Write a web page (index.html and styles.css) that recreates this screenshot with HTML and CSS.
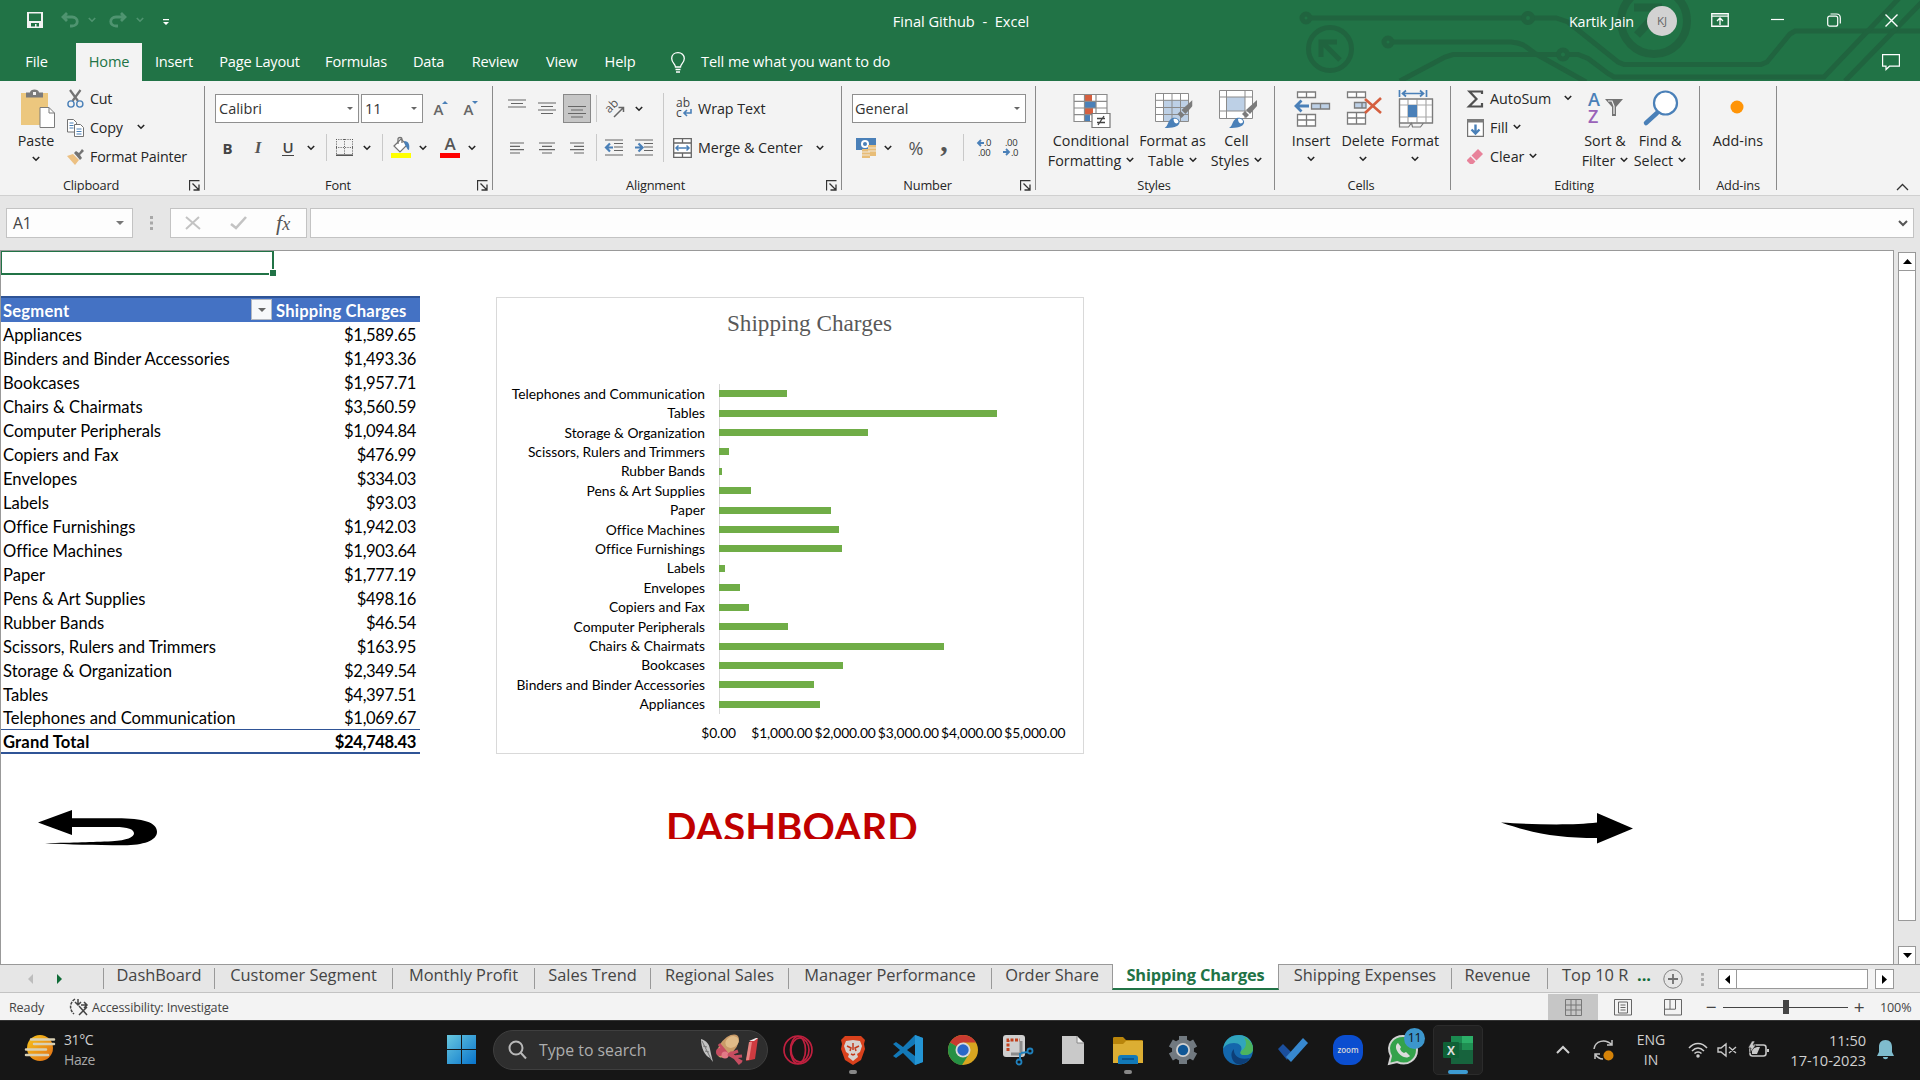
FILE: index.html
```html
<!DOCTYPE html>
<html lang="en">
<head>
<meta charset="utf-8">
<title>Final Github - Excel</title>
<link rel="stylesheet" href="styles.css">
</head>
<body>
<svg class="defs" width="0" height="0">
  <symbol id="chev" viewBox="0 0 8 6"><path d="M.8 1 4 4.2 7.2 1" fill="none" stroke="currentColor" stroke-width="1.6"/></symbol>
  <symbol id="tri" viewBox="0 0 6 3"><path d="M0 0h6L3 3z" fill="currentColor"/></symbol>
  <symbol id="launch" viewBox="0 0 11 11"><path d="M10.5 .5H.5v10M3.5 3.5l6 6M10 4.500v5.500H4.500" fill="none" stroke="#333" stroke-width="1.300"/></symbol>
  <symbol id="brush" viewBox="0 0 28 28"><path d="M28 0v6l-7 8-4-4z" fill="#7b7b7b"/><path d="m16 11 4 4-3 3-4-4z" fill="#7b7b7b"/><path d="M0 28c4-2 3-8 8-10 4-1 8 2 7 5-1 4-7 5-15 5z" fill="#4a80b8"/><path d="M9 19c3-1 5 1 5 3-2 3-5 1-5-3z" fill="#fff"/></symbol>
</svg>
<div class="app">
  <header class="head">
    <svg class="circuit" width="640" height="81" viewBox="1280 0 640 81" fill="none" stroke="#20643f" stroke-width="5">
      <circle cx="1306" cy="18" r="4"/><path d="M1310 18h213M1533 18h23l12 4 50 40 6 2.500h137l6-2.500 23-28 5-3h125"/><circle cx="1528" cy="18" r="4.500"/>
      <circle cx="1388" cy="42" r="4"/><path d="M1392 42h119c14 1 17 7 25 12l50 28M1400 81l45-24 8-2.500h105M1568 54.500h10l10 4 20 15 6 3.500h210l80-84M1845 81l78-80"/><circle cx="1563" cy="54.500" r="4.500"/>
      <circle cx="1330" cy="49" r="21.500"/><path d="M1340 60l-17-17M1321 57V42h16"/>
      <circle cx="1654" cy="21" r="33" stroke-width="8"/><path d="M1634 7.500h28M1662 8l-25 27M1662 8v20" stroke-width="8"/>
    </svg>
    <div class="titlebar">
      <svg class="save" width="16" height="16" viewBox="0 0 16 16"><path d="M0 0h16v16H0z" fill="#f3f3f3"/><path d="M2 1.500h12V9H2zM4 11h8v3.500H9.500V12H8v2.500H4z" fill="#217346"/></svg>
      <svg class="undo" width="18" height="16" viewBox="0 0 18 16"><path d="M6 1 2 5l4 4M2 5h9c7 0 7 9 0 9H9" fill="none" stroke="#4f9470" stroke-width="2.800"/></svg>
      <svg class="faint" width="8" height="6"><use href="#chev"/></svg>
      <svg class="redo" width="18" height="16" viewBox="0 0 18 16"><path d="m12 1 4 4-4 4M16 5H7c-7 0-7 9 0 9h2" fill="none" stroke="#4f9470" stroke-width="2.800"/></svg>
      <svg class="faint" width="8" height="6"><use href="#chev"/></svg>
      <svg class="custom" width="6" height="6" viewBox="0 0 6 6"><path d="M0 0h6v1.300H0zM0 3h6L3 6z" fill="#fff"/></svg>
      <span class="doc">Final Github&nbsp; -&nbsp; Excel</span>
      <span class="user">Kartik Jain</span>
      <span class="avatar">KJ</span>
      <svg width="18" height="14" viewBox="0 0 18 14"><path d="M.75.75h16.500v12.500H.75zM1 3.200h16M9 12V5.500M6 8l3-3 3 3" fill="none" stroke="#fff" stroke-width="1.300"/></svg>
      <svg width="13" height="14" viewBox="0 0 13 14"><path d="M0 6.500h13" stroke="#fff" stroke-width="1.200"/></svg>
      <svg width="14" height="14" viewBox="0 0 14 14" fill="none" stroke="#fff" stroke-width="1.200"><rect x=".7" y="3.200" width="10" height="10" rx="2"/><path d="M3.500 1h6c3 0 3.800 1 3.800 4v5.500"/></svg>
      <svg width="13" height="13" viewBox="0 0 13 13"><path d="M.5.5l12 12M12.500.5l-12 12" stroke="#fff" stroke-width="1.400"/></svg>
    </div>
    <nav class="menu">
      <span>File</span><span class="on">Home</span><span>Insert</span><span>Page Layout</span><span>Formulas</span><span>Data</span><span>Review</span><span>View</span><span>Help</span>
      <svg class="bulb" width="14" height="21" viewBox="0 0 14 21" fill="none" stroke="#fff" stroke-width="1.300"><path d="M4.500 15c0-3-3.800-4-3.800-8.500C.7 3 3.500.7 7 .7s6.300 2.300 6.300 5.800c0 4.500-3.800 5.500-3.800 8.500zM4.500 17.500h5M5 20h4"/></svg>
      <span class="tell">Tell me what you want to do</span>
      <svg class="comment" width="18" height="17" viewBox="0 0 18 17"><path d="M.6.6h16.800v11.600H7.500L4 15.500v-3.300H.6z" fill="none" stroke="#fff" stroke-width="1.200"/></svg>
    </nav>
  </header>

  <section class="ribbon">
    <div class="group clip">
      <div class="body cols-clip">
        <div class="big"><svg width="36" height="40" viewBox="0 0 36 40"><path d="M1 4h27v32H1z" fill="#ecc77e"/><path d="M6 3.500h4C10-.5 19-.5 19 3.500h4v5H6z" fill="#7b7b7b"/><path d="M13 3h3v3h-3z" fill="#f3f3f3"/><path d="M20 18.500h9l5.500 5.500v14.500H20z" fill="#fff" stroke="#7b7b7b"/><path d="M29 18.500V24h5.500" fill="none" stroke="#7b7b7b"/></svg><b>Paste</b><svg width="8" height="6"><use href="#chev"/></svg></div>
        <div class="lines">
          <div><svg width="17" height="18" viewBox="0 0 17 18"><path d="M3 0l8 11M13.500 0l-8 11" stroke="#737373" stroke-width="2.200"/><circle cx="4" cy="14" r="3.100" fill="none" stroke="#4a80b8" stroke-width="1.400"/><circle cx="12.800" cy="14" r="3.100" fill="none" stroke="#4a80b8" stroke-width="1.400"/></svg><span>Cut</span></div>
          <div><svg width="17" height="18" viewBox="0 0 17 18"><path d="M.5.500h6L9.500 3.500V13H.5z" fill="#fff" stroke="#737373"/><path d="M7.500 5.500h6l3 3v9h-9z" fill="#fff" stroke="#737373"/><path d="M2.500 4h4M2.500 6.500h4M2.500 9h4M9.500 10h5M9.500 12.500h5M9.500 15h5" stroke="#4a80b8" stroke-width="1.200"/></svg><span>Copy</span><svg class="cp" width="8" height="6"><use href="#chev"/></svg></div>
          <div><svg width="17" height="16" viewBox="0 0 17 16"><path d="m0 7 6-2 6 6-4 5z" fill="#ecc082"/><path d="m7 4 2-2 3 2 3-4 2 2-4 4 2 3-2 2z" fill="#737373"/></svg><span>Format Painter</span></div>
        </div>
      </div>
      <div class="cap"><i>Clipboard</i><svg width="11" height="11"><use href="#launch"/></svg></div>
    </div>

    <div class="group font">
      <div class="body">
        <div class="row font1"><div class="combo"><span>Calibri</span><svg width="6" height="3"><use href="#tri"/></svg></div><div class="combo"><span>11</span><svg width="6" height="3"><use href="#tri"/></svg></div><span class="grow">A<svg width="6" height="3" viewBox="0 0 6 3"><path d="M0 3h6L3 0z" fill="#4a80b8"/></svg></span><span class="grow">A<svg width="6" height="3" viewBox="0 0 6 3"><path d="M0 0h6L3 3z" fill="#4a80b8"/></svg></span></div>
        <div class="row font2"><span class="fb">B</span><span class="fi">I</span><span class="fu">U</span><svg width="8" height="6"><use href="#chev"/></svg><hr><svg width="17" height="17" viewBox="0 0 17 17"><path d="M.5 0v16M8.500 0v16M16.500 0v16M0 .5h17M0 8.500h17" stroke="#555" stroke-dasharray="1 1.300"/><path d="M0 16.200h17" stroke="#555" stroke-width="1.600"/></svg><svg width="8" height="6"><use href="#chev"/></svg><hr><svg width="20" height="21" viewBox="0 0 20 21"><path d="M0 16h20v5H0z" fill="#ff0"/><path d="m3 9 7-7 6 6-7 7z" fill="#fff" stroke="#737373" stroke-width="1.200"/><path d="M7 7V2c0-2 4-2 4 0v4" fill="none" stroke="#737373" stroke-width="1.300"/><path d="M13 4c5 0 6 4 5 9-2 0-2-3-4-5z" fill="#4a80b8"/></svg><svg width="8" height="6"><use href="#chev"/></svg><span class="fc">A</span><svg width="8" height="6"><use href="#chev"/></svg></div>
      </div>
      <div class="cap"><i>Font</i><svg width="11" height="11"><use href="#launch"/></svg></div>
    </div>

    <div class="group align">
      <div class="body cols-align">
        <div>
          <div class="row al"><svg class="up" width="18" height="14" viewBox="0 0 18 14"><path d="M0 1h18M3 4.500h12M0 8h18" stroke="#666" stroke-width="1.200"/></svg><svg width="18" height="14" viewBox="0 0 18 14"><path d="M0 1h18M3 4.500h12M0 8h18M3 11.500h12" stroke="#666" stroke-width="1.200"/></svg><span class="pressed"><svg width="18" height="14" viewBox="0 0 18 14"><path d="M0 1.500h18M3 5h12M0 8.500h18M3 12h12" stroke="#666" stroke-width="1.200"/></svg></span><hr><svg width="20" height="18" viewBox="0 0 20 18"><text x="1" y="10" transform="rotate(-45 7 8)" class="abt">ab</text><path d="M9 17 18 8M13.500 7.500H18.500V12" fill="none" stroke="#666" stroke-width="1.500"/></svg><svg width="8" height="6"><use href="#chev"/></svg></div>
          <div class="row al2"><svg width="18" height="12" viewBox="0 0 18 12"><path d="M2 1h14M2 4.300h10M2 7.700h14M2 11h10" stroke="#666" stroke-width="1.200"/></svg><svg width="18" height="12" viewBox="0 0 18 12"><path d="M1 1h16M4 4.300h10M1 7.700h16M4 11h10" stroke="#666" stroke-width="1.200"/></svg><svg width="18" height="12" viewBox="0 0 18 12"><path d="M2 1h14M6 4.300h10M2 7.700h14M6 11h10" stroke="#666" stroke-width="1.200"/></svg><hr><svg width="18" height="17" viewBox="0 0 18 17"><path d="M0 1h18M9 4.500h9M9 8h9M9 11.500h9M0 16h18" stroke="#666" stroke-width="1.200"/><path d="M8 8.500H2M5 4.500l-4 4 4 4" fill="none" stroke="#4a80b8" stroke-width="2.200"/></svg><svg width="18" height="17" viewBox="0 0 18 17"><path d="M0 1h18M9 4.500h9M9 8h9M9 11.500h9M0 16h18" stroke="#666" stroke-width="1.200"/><path d="M0 8.500h6M3.500 4.500l4 4-4 4" fill="none" stroke="#4a80b8" stroke-width="2.200"/></svg></div>
        </div>
        <hr class="tall">
        <div>
          <div class="row wrap"><svg width="16" height="20" viewBox="0 0 16 20"><text x="0" y="8" class="abc">ab</text><text x="0" y="18" class="abc">c</text><path d="M15 10v4H8M11 11l-3 3 3 3" fill="none" stroke="#4a80b8" stroke-width="1.600"/></svg><span>Wrap Text</span></div>
          <div class="row merge"><svg width="19" height="20" viewBox="0 0 19 20"><path d="M.7.7h17.600v18.600H.7zM.7 5h17.600M.7 15h17.600M9.500.7V5M9.500 15v4" fill="#fff" stroke="#666" stroke-width="1.300"/><path d="M3 10h13M5.500 7.500 3 10l2.500 2.500M13.500 7.500 16 10l-2.500 2.500" fill="none" stroke="#4a80b8" stroke-width="1.500"/></svg><span>Merge &amp; Center</span><svg width="8" height="6"><use href="#chev"/></svg></div>
        </div>
      </div>
      <div class="cap"><i>Alignment</i><svg width="11" height="11"><use href="#launch"/></svg></div>
    </div>

    <div class="group number">
      <div class="body">
        <div class="row num1"><div class="combo"><span>General</span><svg width="6" height="3"><use href="#tri"/></svg></div></div>
        <div class="row num2"><svg width="20" height="20" viewBox="0 0 20 20"><path d="M0 0h20v12H0z" fill="#4a80b8"/><ellipse cx="9" cy="6" rx="4" ry="4" fill="#fff"/><circle cx="9" cy="6" r="2" fill="#4a80b8"/><path d="M12 7h8v11h-6v2H6v-9h6z" fill="#e8bd77"/><path d="M12 10h8M12 13h8M6 14h8M6 17h8" stroke="#f3f3f3" stroke-width=".8"/></svg><svg width="8" height="6"><use href="#chev"/></svg><span class="pct">%</span><span class="comma">,</span><hr><svg width="17" height="19" viewBox="0 0 17 19"><path d="M8 5H2M5 2 2 5l3 3" fill="none" stroke="#4a80b8" stroke-width="1.800"/><text x="8" y="8" class="dec">.0</text><text x="2" y="18" class="dec">.00</text></svg><svg width="17" height="19" viewBox="0 0 17 19"><path d="M0 14h6M3 11l3 3-3 3" fill="none" stroke="#4a80b8" stroke-width="1.800"/><text x="2" y="8" class="dec">.00</text><text x="8" y="18" class="dec">.0</text></svg></div>
      </div>
      <div class="cap"><i>Number</i><svg width="11" height="11"><use href="#launch"/></svg></div>
    </div>

    <div class="group styles">
      <div class="body cols-styles">
        <div class="big"><svg width="38" height="38" viewBox="0 0 38 38"><path d="M.5 4.500h34v27H.5z" fill="#fff"/><path d="M11 5h8v6h-8zM11 18h9v7h-9z" fill="#d55f3f"/><path d="M11 11h12v7H11zM11 25h6v6h-6z" fill="#4a80b8"/><path d="M1 4.500h33v27H1zM11.500 4v27M23 4v27M1 11.300h33M1 18h33M1 24.700h33" fill="none" stroke="#8b8b8b" stroke-width="1.200"/><path d="M19 23.500h18v14H19z" fill="#fff" stroke="#777" stroke-width="1.200"/><path d="M24 28.500h8M24 32.500h8M31 26l-6 9" stroke="#444" stroke-width="1.300"/></svg><b>Conditional</b><b>Formatting <svg width="8" height="6"><use href="#chev"/></svg></b></div>
        <div class="big"><svg width="38" height="38" viewBox="0 0 38 38"><path d="M.5 3.500h33v28H.5z" fill="#fff"/><path d="M9 10h24v21H9z" fill="#bdd0e6"/><path d="M.5 3.500h33v28H.5zM8.500 3v28M17 3v28M25.500 3v28M0 10.300h33M0 17.500h33M0 24.500h33" fill="none" stroke="#8b8b8b"/><use href="#brush" x="9.500" y="10" width="28" height="28"/></svg><b>Format as</b><b>Table <svg width="8" height="6"><use href="#chev"/></svg></b></div>
        <div class="big"><svg width="38" height="38" viewBox="0 0 38 38"><path d="M.5.500h33v28H.5z" fill="#fff"/><path d="M8 7h18v14H8z" fill="#bdd0e6"/><path d="M.5.500h33v28H.5zM7.500 0v28M26 0v28M0 7h33M0 21h33" fill="none" stroke="#8b8b8b"/><use href="#brush" x="10" y="10" width="28" height="28"/></svg><b>Cell</b><b>Styles <svg width="8" height="6"><use href="#chev"/></svg></b></div>
      </div>
      <div class="cap"><i>Styles</i></div>
    </div>

    <div class="group cells">
      <div class="body cols-cells">
        <div class="big"><svg width="36" height="38" viewBox="0 0 36 38" fill="none" stroke="#7b7b7b" stroke-width="1.300"><path d="M3.500 2h18v5.500h-18zM12.500 2v5.500M3.500 24.500h18v11.500h-18zM12.500 24.500V36M3.500 30h18" fill="#fff"/><path d="M17.500 13.500h18v5.500h-18zM26.500 13.500V19" fill="#bdd0e6"/><path d="M15 16H2M7.500 10.500 2 16l5.500 5.500" stroke="#4a80b8" stroke-width="2.800"/></svg><b>Insert</b><svg width="8" height="6"><use href="#chev"/></svg></div>
        <div class="big"><svg width="36" height="38" viewBox="0 0 36 38" fill="none" stroke="#7b7b7b" stroke-width="1.300"><path d="M1.500 2h18v5.500h-18zM10.500 2v5.500M1.500 22.500h18V34h-18zM10.500 22.500V34M1.500 28h18" fill="#fff"/><path d="M8.500 12.500H20V18H8.500zM16 12.500V18" fill="#bdd0e6"/><path d="M19 9l16 14M35 8 19 23" stroke="#d55f3f" stroke-width="2.600"/></svg><b>Delete</b><svg width="8" height="6"><use href="#chev"/></svg></div>
        <div class="big"><svg width="36" height="38" viewBox="0 0 36 38" fill="none" stroke="#7b7b7b" stroke-width="1.200"><path d="M1.500 9h33v24h-33z" fill="#fff"/><path d="M10 9v24M19 9v24M28 9v24M2 15h32M2 27h32" stroke="#aaa"/><path d="M1.500 9h33v24h-33zM1.500 33v4h9l3-4 1 4h8l3-4"/><path d="M10 15h9v12h-9z" fill="#4a80b8" stroke="none"/><path d="M1.500 0v7M28.500 0v7M4 3.500h22M8 .5l-3.500 3L8 6.500M22 .5l3.500 3-3.500 3" stroke="#4a80b8" stroke-width="1.700"/></svg><b>Format</b><svg width="8" height="6"><use href="#chev"/></svg></div>
      </div>
      <div class="cap"><i>Cells</i></div>
    </div>

    <div class="group edit">
      <div class="body cols-edit">
        <div class="lines">
          <div><svg width="16" height="18" viewBox="0 0 16 18"><path d="M14.500 4V1.500H2L9 9l-7.500 7.500h13V13" fill="none" stroke="#505050" stroke-width="2.200"/></svg><span>AutoSum</span><svg class="as" width="8" height="6"><use href="#chev"/></svg></div>
          <div><svg width="17" height="18" viewBox="0 0 17 18"><path d="M.6.600h15.800v16.800H.6z" fill="#fff" stroke="#737373" stroke-width="1.200"/><path d="M0 0h17v3.500H0z" fill="#7b7b7b"/><path d="M8.500 5.500V15M4.500 10.500l4 4 4-4" fill="none" stroke="#4a80b8" stroke-width="2.400"/></svg><span>Fill</span><svg class="nx" width="8" height="6"><use href="#chev"/></svg></div>
          <div><svg width="17" height="16" viewBox="0 0 17 16"><path d="m11 0 5 5-6.500 6.500-5-5z" fill="#e8829a"/><path d="m3.500 7.500 5 5L6 15H3L0 12v-1z" fill="#e8829a"/></svg><span>Clear</span><svg class="nx" width="8" height="6"><use href="#chev"/></svg></div>
        </div>
        <div class="big"><svg width="36" height="38" viewBox="0 0 36 38"><text x="0" y="16" class="az blue">A</text><text x="0" y="33" class="az purple">Z</text><path d="M17 9h18l-7 8v9h-4v-9z" fill="#737373"/><path d="M20 11h4l2 5v8" fill="none" stroke="#f3f3f3" stroke-width="1.200"/></svg><b>Sort &amp;</b><b>Filter <svg width="8" height="6"><use href="#chev"/></svg></b></div>
        <div class="big"><svg width="36" height="38" viewBox="0 0 36 38"><path d="M14 23 3 33" stroke="#4a80b8" stroke-width="4.500" stroke-linecap="round"/><circle cx="22.500" cy="13" r="11.500" fill="#fff" stroke="#4a80b8" stroke-width="2.200"/></svg><b>Find &amp;</b><b>Select <svg width="8" height="6"><use href="#chev"/></svg></b></div>
      </div>
      <div class="cap"><i>Editing</i></div>
    </div>

    <div class="group addins">
      <div class="body cols-add"><div class="big"><svg width="36" height="38" viewBox="0 0 36 38"><circle cx="17" cy="17" r="6.500" fill="#ff9406"/></svg><b>Add-ins</b></div></div>
      <div class="cap"><i>Add-ins</i></div>
    </div>
    <svg class="collapse" width="13" height="8" viewBox="0 0 13 8"><path d="M1 7l5.500-5.500L12 7" fill="none" stroke="#333" stroke-width="1.300"/></svg>
  </section>

  <section class="fbar">
    <div class="name"><span>A1</span><svg width="8" height="4" viewBox="0 0 6 3"><path d="M0 0h6L3 3z" fill="#777"/></svg></div>
    <svg class="dots" width="3" height="14" viewBox="0 0 3 14"><path d="M0 0h3v3H0zM0 5.500h3v3H0zM0 11h3v3H0z" fill="#a8a8a8"/></svg>
    <div class="fx"><svg width="16" height="14" viewBox="0 0 16 14"><path d="M1 1l14 12M14 1 1 13" stroke="#c3c3c3" stroke-width="2"/></svg><svg width="17" height="14" viewBox="0 0 17 14"><path d="m1 8 5 4L16 1" fill="none" stroke="#c3c3c3" stroke-width="2.600"/></svg><span>f<small>x</small></span></div>
    <div class="input"><svg width="10" height="7" viewBox="0 0 10 7"><path d="m1 1 4 4 4-4" fill="none" stroke="#555" stroke-width="2"/></svg></div>
  </section>

  <main class="work">
    <div class="sheet">
      <div class="cell-a1"></div>
      <table class="pivot">
        <thead><tr><th>Segment<span class="filter"><svg width="8" height="4" viewBox="0 0 6 3"><path d="M0 0h6L3 3z" fill="#666"/></svg></span></th><th>Shipping Charges</th></tr></thead>
        <tbody>
          <tr><td>Appliances</td><td>$1,589.65</td></tr>
          <tr><td>Binders and Binder Accessories</td><td>$1,493.36</td></tr>
          <tr><td>Bookcases</td><td>$1,957.71</td></tr>
          <tr><td>Chairs &amp; Chairmats</td><td>$3,560.59</td></tr>
          <tr><td>Computer Peripherals</td><td>$1,094.84</td></tr>
          <tr><td>Copiers and Fax</td><td>$476.99</td></tr>
          <tr><td>Envelopes</td><td>$334.03</td></tr>
          <tr><td>Labels</td><td>$93.03</td></tr>
          <tr><td>Office Furnishings</td><td>$1,942.03</td></tr>
          <tr><td>Office Machines</td><td>$1,903.64</td></tr>
          <tr><td>Paper</td><td>$1,777.19</td></tr>
          <tr><td>Pens &amp; Art Supplies</td><td>$498.16</td></tr>
          <tr><td>Rubber Bands</td><td>$46.54</td></tr>
          <tr><td>Scissors, Rulers and Trimmers</td><td>$163.95</td></tr>
          <tr><td>Storage &amp; Organization</td><td>$2,349.54</td></tr>
          <tr><td>Tables</td><td>$4,397.51</td></tr>
          <tr><td>Telephones and Communication</td><td>$1,069.67</td></tr>
        </tbody>
        <tfoot><tr><td>Grand Total</td><td>$24,748.43</td></tr></tfoot>
      </table>

      <figure class="chart">
        <figcaption>Shipping Charges</figcaption>
        <div class="plot">
          <div class="bar"><span>Telephones and Communication</span><i style="width:67.700px"></i></div>
          <div class="bar"><span>Tables</span><i style="width:278.200px"></i></div>
          <div class="bar"><span>Storage &amp; Organization</span><i style="width:148.600px"></i></div>
          <div class="bar"><span>Scissors, Rulers and Trimmers</span><i style="width:10.400px"></i></div>
          <div class="bar"><span>Rubber Bands</span><i style="width:2.900px"></i></div>
          <div class="bar"><span>Pens &amp; Art Supplies</span><i style="width:31.500px"></i></div>
          <div class="bar"><span>Paper</span><i style="width:112.400px"></i></div>
          <div class="bar"><span>Office Machines</span><i style="width:120.400px"></i></div>
          <div class="bar"><span>Office Furnishings</span><i style="width:122.800px"></i></div>
          <div class="bar"><span>Labels</span><i style="width:5.900px"></i></div>
          <div class="bar"><span>Envelopes</span><i style="width:21.100px"></i></div>
          <div class="bar"><span>Copiers and Fax</span><i style="width:30.200px"></i></div>
          <div class="bar"><span>Computer Peripherals</span><i style="width:69.300px"></i></div>
          <div class="bar"><span>Chairs &amp; Chairmats</span><i style="width:225.200px"></i></div>
          <div class="bar"><span>Bookcases</span><i style="width:123.800px"></i></div>
          <div class="bar"><span>Binders and Binder Accessories</span><i style="width:94.500px"></i></div>
          <div class="bar"><span>Appliances</span><i style="width:100.600px"></i></div>
        </div>
        <div class="axis"><span>$0.00</span><span>$1,000.00</span><span>$2,000.00</span><span>$3,000.00</span><span>$4,000.00</span><span>$5,000.00</span></div>
      </figure>

      <svg class="back" width="121" height="37" viewBox="0 0 121 37"><path d="M0 12.500 34 0v8.200h45c26 0 40 4 40 13.500 0 9-14 13.500-33 13.500-32 0-53-.8-79-2 30-.8 46-1 67-2 15-1 22-4 22-8 0-4-6-6.300-19-6.300H34v8z"/></svg>
      <div class="dash">DASHBOARD</div>
      <svg class="next" width="132" height="31" viewBox="0 0 132 31"><path d="M0 9.500c31 2 72 3 96 0V0l36 15.500-36 15V25C58 25 34 21 0 9.500z"/></svg>
    </div>
    <div class="vscroll"><span><svg width="9" height="5" viewBox="0 0 9 5"><path d="M0 5h9L4.500 0z"/></svg></span><i></i><span><svg width="9" height="5" viewBox="0 0 9 5"><path d="M0 0h9L4.500 5z"/></svg></span></div>
  </main>

  <nav class="sheets">
    <svg class="arr" width="5" height="10" viewBox="0 0 5 10"><path d="M5 0v10L0 5z" fill="#bdbdbd"/></svg>
    <svg class="arr" width="5" height="10" viewBox="0 0 5 10"><path d="M0 0v10l5-5z" fill="#0f6b37"/></svg>
    <span>DashBoard</span><span>Customer Segment</span><span>Monthly Profit</span><span>Sales Trend</span><span>Regional Sales</span><span>Manager Performance</span><span>Order Share</span><span class="cur">Shipping Charges</span><span>Shipping Expenses</span><span>Revenue</span><span class="cut">Top 10 R</span><b class="more">...</b>
    <svg class="plus" width="20" height="20" viewBox="0 0 20 20"><circle cx="10" cy="10" r="9.200" fill="none" stroke="#808080"/><path d="M10 5v10M5 10h10" stroke="#707070" stroke-width="1.800"/></svg>
    <svg class="grip" width="3" height="13" viewBox="0 0 3 14"><path d="M0 0h3v3H0zM0 5.500h3v3H0zM0 11h3v3H0z" fill="#a8a8a8"/></svg>
    <div class="hscroll"><em><svg width="5" height="9" viewBox="0 0 5 9"><path d="M5 0v9L0 4.500z"/></svg></em><i></i><em><svg width="5" height="9" viewBox="0 0 5 9"><path d="M0 0v9l5-4.500z"/></svg></em></div>
  </nav>

  <footer class="status">
    <span>Ready</span>
    <svg width="19" height="18" viewBox="0 0 19 18" fill="none" stroke="#444" stroke-width="1.500"><path d="M5 1C-1 5-.5 12 4 16" stroke-dasharray="3 1"/><path d="M8 1v5M5 4l3 3 3-3M11 7h6M14 4l3 3-3 3M9 8l8 9M17 9l-8 8"/></svg>
    <span class="acc">Accessibility: Investigate</span>
    <div class="view on"><svg width="17" height="17" viewBox="0 0 17 17"><path d="M.5.500h16v16H.5zM6 0v17M11 0v17M0 6h17M0 11h17" fill="none" stroke="#777"/></svg></div>
    <div class="view"><svg width="18" height="17" viewBox="0 0 18 17"><path d="M.5.500h17v15.500H.5zM4.500 3h9v11h-9zM6.500 6h5M6.500 8.500h5M6.500 11h5" fill="none" stroke="#666"/></svg></div>
    <div class="view"><svg width="18" height="17" viewBox="0 0 18 17"><path d="M.5.500h17v15.500H.5zM6 .5V10M11.500.5V10M.5 10.200h11" fill="none" stroke="#666"/></svg></div>
    <b class="zm">−</b>
    <div class="zoom"><i></i></div>
    <b class="zp">+</b>
    <span class="pc">100%</span>
  </footer>

  <footer class="task">
    <svg class="weather" width="30" height="28" viewBox="0 0 30 28"><defs><linearGradient id="sun" x2="1" y2="1"><stop stop-color="#f8c51a"/><stop offset="1" stop-color="#e06d16"/></linearGradient></defs><circle cx="15" cy="14" r="13" fill="url(#sun)"/><path d="M6 5.500h23M9 10h20M1 15.500h20M1 21h22" stroke="#d9d0b4" stroke-width="2.500" stroke-linecap="round"/></svg>
    <div class="wt"><span>31°C</span><span>Haze</span></div>
    <svg class="win" width="29" height="29" viewBox="0 0 29 29"><defs><linearGradient id="w" x2="1" y2="1"><stop stop-color="#68c8df"/><stop offset="1" stop-color="#0874cc"/></linearGradient></defs><path d="M0 0h14v14H0zM15 0h14v14H15zM0 15h14v14H0zM15 15h14v14H15z" fill="url(#w)"/></svg>
    <div class="search">
      <svg width="19" height="19" viewBox="0 0 19 19" fill="none" stroke="#b9b9b9" stroke-width="2"><circle cx="8" cy="8" r="6.500"/><path d="m12.500 12.500 5.500 6"/></svg><span>Type to search</span>
      <svg width="60" height="28" viewBox="0 0 60 28"><path d="M1 3c6 2 8 5 9 10l1 5 2 8-3-4C5 20 1 12 1 3z" fill="#c4c4c4"/><path d="m2 5 9 18M3 10l4 1M5 15l4 1" stroke="#777" fill="none"/><ellipse cx="28" cy="10" rx="14" ry="7.500" transform="rotate(-48 28 10)" fill="#c99b68"/><ellipse cx="32" cy="6" rx="7" ry="5.500" transform="rotate(-30 32 6)" fill="#e0bb88"/><path d="m19 8 9 11 10-4" fill="none" stroke="#c64d61" stroke-width="3"/><circle cx="20" cy="16" r="4" fill="#c64d61"/><circle cx="25" cy="19" r="3.500" fill="#e27a86"/><path d="m28 18 14 8M30 16l10 12M33 21l9-1" stroke="#c64d61" stroke-width="3"/><path d="m50 5 8-3-3 21-9 2z" fill="#cf3b40"/><path d="m49 5 7-3 2 0-4 3z" fill="#eee"/><path d="m49 6 3 0-3 18-3 0z" fill="#e78481"/></svg>
    </div>
    <div class="apps">
      <div><svg viewBox="0 0 30 30" fill="none" stroke="#c0203f" stroke-width="1.700"><circle cx="15" cy="15" r="14"/><ellipse cx="15" cy="15" rx="7.500" ry="13.500"/><ellipse cx="17" cy="15" rx="9" ry="12"/></svg></div>
      <div class="run"><svg viewBox="0 0 30 30"><path d="M7 1h16l4 4-1 4 1 5-4 11-8 5-8-5L3 14l1-5-1-4z" fill="#d9411c"/><path d="m8 6 7-1 7 1 2 5-2 6-3 2 1 3-5 4-5-4 1-3-3-2-2-6z" fill="#d7d2ce"/><path d="M9 11l4 2-1 3M21 11l-4 2 1 3M13 19l2 1 2-1M15 8v7" fill="none" stroke="#c43b1c" stroke-width="1.500"/></svg></div>
      <div><svg viewBox="0 0 30 30"><path d="M22 0l8 3v24l-8 3L10 18l-7 5-3-2 7-6-7-6 3-2 7 5z" fill="#1379b8"/><path d="M22 0l8 3v24l-8 3z" fill="#2495d4"/><path d="M22 9v12l-8-6z" fill="#161616"/></svg></div>
      <div><svg viewBox="0 0 30 30"><circle cx="15" cy="15" r="15" fill="#d8a520"/><path d="M15 15 2 7.500A15 15 0 0 1 28 7.500H15z" fill="#c83a30"/><path d="M2 7.500A15 15 0 0 0 14 30l7-11-6-4z" fill="#269044"/><circle cx="15" cy="15" r="7.500" fill="#dadada"/><circle cx="15" cy="15" r="5.700" fill="#2967c8"/></svg></div>
      <div><svg viewBox="0 0 30 30"><rect width="22" height="22" rx="3" fill="#cfcfcf"/><path d="M5 16V5h12" fill="none" stroke="#c2401c" stroke-width="3" stroke-dasharray="3 1.500"/><path d="M18 6v13H8" fill="none" stroke="#8c8c8c" stroke-width="3"/><path d="M17 18v6M18 18l7-1" stroke="#2081bd" stroke-width="2"/><circle cx="27" cy="16" r="2.500" fill="none" stroke="#2081bd" stroke-width="1.800"/><circle cx="16" cy="27" r="2.500" fill="none" stroke="#2081bd" stroke-width="1.800"/></svg></div>
      <div><svg viewBox="0 0 30 30"><path d="M4 1h15l7 7v21H4z" fill="#c9c9c9"/><path d="M19 1v7h7z" fill="#eee" stroke="#888"/></svg></div>
      <div class="run"><svg viewBox="0 0 30 30"><path d="M0 3c0-1 1-1 2-1h8l3 3h16c1 0 1 1 1 2v5H0z" fill="#b9850b"/><path d="M0 9h10l3-3h17v22H0z" fill="#dcae33"/><path d="M5 23c0-2 1-3 3-3h14c2 0 3 1 3 3v6H5z" fill="#1279b8"/><path d="M9 24h12" stroke="#0a4b80" stroke-width="1.500"/></svg></div>
      <div><svg viewBox="0 0 30 30"><g fill="#717980"><circle cx="15" cy="15" r="11"/><path d="M11 1h8v28h-8z"/><path d="M11 1h8v28h-8z" transform="rotate(60 15 15)"/><path d="M11 1h8v28h-8z" transform="rotate(120 15 15)"/></g><circle cx="15" cy="15" r="7" fill="#d0d0d0"/><circle cx="15" cy="15" r="5.200" fill="#105796"/></svg></div>
      <div><svg viewBox="0 0 30 30"><circle cx="15" cy="15" r="15" fill="#1467ac"/><path d="M0 15C1 3 10 0 16 0c9 0 14 7 14 13 0 5-4 7-8 7-5 0-5-2-4-4 2-5-2-8-7-8-6 0-10 3-11 7z" fill="#31a5bd"/><path d="M21 2c6 3 9 7 9 12 0 4-4 6-8 6-5 0-5-2-4-4 6-3 6-9 3-14z" fill="#4cb45e"/><path d="M11 14c-1 6 5 12 16 9-4 6-9 7-13 6-5-2-8-11-3-15z" fill="#0d3f78"/></svg></div>
      <div><svg viewBox="0 0 30 30"><path d="m0 14 5-5 8 8-4 8z" fill="#1b4f9e"/><path d="m8 22 17-19 5 5-17 19z" fill="#3788cf"/></svg></div>
      <div><svg viewBox="0 0 30 30"><rect width="30" height="30" rx="12" fill="#0b4ed0"/><text x="15" y="18" text-anchor="middle" class="zm-t">zoom</text></svg></div>
      <div class="wa"><svg viewBox="0 0 30 30"><path d="M1 29l2-8C-3 9 6 1 15 1c8 0 14 6 14 14 0 9-9 17-20 12z" fill="#34a24b" stroke="#d2d2d2" stroke-width="2"/><path d="M10 8c-7 5 6 19 12 13l-4-4-2 1c-2-1-3-2-4-4l1-2z" fill="#ddd"/></svg><sup>11</sup></div>
      <div class="xl"><svg viewBox="0 0 30 30"><path d="M8 1h22v28H8z" fill="#17633d"/><path d="M8 1h11v7H8z" fill="#1b8a50"/><path d="M19 1h11v7H19z" fill="#2caf68"/><path d="M19 8h11v7H19z" fill="#1f8f52"/><path d="M8 8h11v7H8z" fill="#176d42"/><rect y="7" width="16" height="16" rx="1" fill="#0f6136"/><text x="8" y="20" text-anchor="middle" class="xl-t">X</text></svg></div>
    </div>
    <div class="tray">
      <svg width="14" height="9" viewBox="0 0 14 9"><path d="m1 8 6-6 6 6" fill="none" stroke="#d0d0d0" stroke-width="2"/></svg>
      <svg width="21" height="22" viewBox="0 0 21 22" fill="none" stroke="#c4c4c4" stroke-width="1.500"><path d="M1 10C2 2 12-1 19 6M19 1v5h-5M2 20v-5h5M2 15c2 3 4 5 8 5"/><circle cx="15.500" cy="16.500" r="5" fill="#d48208" stroke="none"/></svg>
      <div class="lang"><span>ENG</span><span>IN</span></div>
      <svg width="20" height="16" viewBox="0 0 20 16" fill="none" stroke="#cdcdcd" stroke-width="1.500"><path d="M1 6c5-6 13-6 18 0M4 9c4-4 8-4 12 0M6.500 11.500c2-2 5-2 7 0"/><circle cx="10" cy="14" r="1" fill="#cdcdcd"/></svg>
      <svg width="20" height="14" viewBox="0 0 20 14" fill="none" stroke="#c8c8c8" stroke-width="1.400"><path d="M1 5h3l5-4v12l-5-4H1zM12 4l7 6M19 4l-7 6"/></svg>
      <svg width="21" height="17" viewBox="0 0 21 17"><rect x="2" y="4" width="16" height="11" rx="2.500" fill="none" stroke="#c8c8c8" stroke-width="1.600"/><path d="M4 13V8l5-2h3l-3 7zM19 8h2v3h-2z" fill="#c8c8c8"/><path d="M4 0 0 7h3l-1 5 6-8H5l2-4z" fill="#c8c8c8" stroke="#161616" stroke-width=".6"/></svg>
      <div class="clock"><span>11:50</span><span>17-10-2023</span></div>
      <svg width="17" height="20" viewBox="0 0 17 20"><path d="M8.500 0C4 0 2 3 2 7v5l-2 4h17l-2-4V7c0-4-2-7-6.500-7zM6 17h5c0 3-5 3-5 0z" fill="#7fbccd"/></svg>
    </div>
  </footer>
</div>
</body>
</html>
```
FILE: styles.css
```css
* { box-sizing: border-box; }
body { margin: 0; font-family: "Open Sans", "Noto Sans", sans-serif; font-size: 14.3px; color: #262626; }
svg { display: block; flex: none; overflow: visible; }
hr { margin: 0; border: 0; width: 1px; height: 27px; background: #c9c9c9; }
b, i, em { font-weight: normal; font-style: normal; }
.defs { position: absolute; }
.app { width: 1920px; height: 1080px; display: grid; grid-template-rows: 81px 115px 54px 714px 29px 27px 60px; overflow: hidden; background: #e6e6e6; white-space: nowrap; }

/* title bar and menu */
.head { position: relative; background: #217346; color: #fff; }
.circuit { position: absolute; right: 0; top: 0; overflow: hidden; }
.titlebar { position: relative; height: 43px; padding: 0 0 3px 27px; display: flex; align-items: center; }
.undo { margin-left: 18px; }
.faint { margin-left: 9px; color: #4f9470; }
.redo { margin-left: 13px; }
.custom { margin: 4px 0 0 19px; }
.doc { width: 140px; margin: 2px 0 0 722px; text-align: center; font-size: 14.6px; }
.user { width: 69px; margin: 3px 0 0 538px; font-size: 14.3px; letter-spacing: -.15px; }
.avatar { width: 30px; height: 30px; margin: 2px 0 0 9px; border-radius: 50%; background: #d2d2d2; color: #666; font-size: 11.5px; line-height: 30px; text-align: center; }
.avatar + svg { margin-left: 34px; }
.avatar + svg + svg { margin-left: 42px; }
.avatar + svg + svg + svg { margin-left: 43px; }
.avatar + svg + svg + svg + svg { margin-left: 44px; }
.menu { position: relative; height: 38px; display: grid; grid-template-columns: 76px 66px 64px 107px 86px 59px 74px 59px 58px 52px 1181px 38px; line-height: 36px; text-align: center; font-size: 14.6px; letter-spacing: -.2px; }
.menu span:first-child { padding-right: 3px; }
.menu .on { background: #f3f3f3; color: #217346; }
.bulb { margin: 9px 0 0 22px; }
.menu .tell { text-align: left; letter-spacing: -.1px; }
.comment { margin-top: 11px; }

/* ribbon */
.ribbon { display: flex; align-items: flex-start; background: #f3f3f3; border-bottom: 1px solid #d0d0d0; padding-top: 5px; }
.group { height: 104px; border-right: 1px solid #8a8a8a; display: grid; grid-template-rows: 90px 14px; }
.clip { width: 205px; } .font { width: 288px; } .align { width: 349px; } .number { width: 194px; }
.styles { width: 239px; } .cells { width: 176px; } .edit { width: 249px; } .addins { width: 77px; }
.cap { display: flex; justify-content: center; align-items: center; font-size: 12.8px; letter-spacing: -.2px; position: relative; padding: 3px 0 0; }
.clip .cap { padding-right: 22px; }
.font .cap { padding-right: 21px; }
.align .cap { padding-right: 23px; }
.number .cap { padding-right: 22px; }
.cap svg { position: absolute; right: 4px; top: 4px; }
.big { display: flex; flex-direction: column; align-items: center; line-height: 20px; padding-top: 4px; }
.big b { display: flex; align-items: center; gap: 5px; }
.big b svg { margin-top: -2px; }
.big > svg:first-child { height: 38px; margin-bottom: 3px; }
.big > svg:last-child { margin-top: 5px; }
.cols-clip { display: grid; grid-template-columns: 20px 36px 11px 1fr; }
.cols-clip > :first-child { grid-column: 2; padding-top: 3px; }
.cols-clip .lines { grid-column: 4; letter-spacing: -.2px; }
.clip .big > svg:first-child { height: 40px; margin-bottom: 2px; }
.clip .big b, .clip .big > svg:last-child { margin-left: -4px; }
.lines { display: grid; grid-template-rows: 26px 32px 26px; height: 84px; }
.lines > div { display: flex; align-items: center; }
.lines > div > svg:first-child { width: 17px; margin-right: 6px; }
.lines span { padding-bottom: 1px; }
.cp { margin-left: 14px; } .as { margin-left: 13px; } .nx { margin-left: 5px; }
.lines .cp, .lines .as, .lines .nx { margin-top: -3px; }
.row { display: grid; align-items: center; justify-items: center; height: 33px; }
.row:first-child { height: 45px; }
.combo { justify-self: stretch; height: 29px; margin-right: 2px; border: 1px solid #8f8f8f; background: #fff; display: flex; align-items: center; justify-content: space-between; padding: 0 5px 0 2px; font-size: 14.5px; color: #333; }
.combo svg { color: #666; }
.font1 { grid-template-columns: 146px 64px 32px 28px; padding-left: 10px; }
.font1 .combo span { padding-left: 1px; }
.grow { display: flex; font: 600 15px "Open Sans", sans-serif; color: #666; }
.grow svg { margin: 2px 0 0 -1px; }
.font2 { grid-template-columns: 25px 36px 24px 22px 8px 28px 18px 12px 26px 18px 36px 8px; padding-left: 10px; justify-content: start; }
.fb { font-size: 15px; font-weight: 700; color: #444; }
.fi { font: italic bold 17px "Liberation Serif", serif; color: #555; }
.fu { font-size: 15px; font-weight: 600; line-height: 15px; color: #444; border-bottom: 1px solid #444; }
.fc { width: 20px; height: 21px; font-weight: 600; font-size: 17px; line-height: 14px; text-align: center; color: #555; border-bottom: 5px solid #f00; }
.cols-align { display: grid; grid-template-columns: 170px 1px 1fr; }
.al, .al2 { grid-template-columns: 30px 30px 30px 8px 30px 18px; padding-left: 9px; justify-content: start; }
.al2 { grid-template-columns: 30px 30px 30px 8px 28px 32px; }
.al .up { margin-top: -6px; }
.pressed { width: 28px; height: 29px; background: #c6c6c6; border: 1px solid #888; display: grid; place-items: end center; padding-bottom: 3px; }
.tall { height: 69px; margin-top: 7px; }
.wrap, .merge { grid-template-columns: 20px 5px 106px 30px; padding-left: 9px; justify-items: start; justify-content: start; }
.wrap span, .merge span { grid-column: 3; letter-spacing: -.05px; }
.wrap svg { justify-self: center; margin-left: 2px; }
.merge svg:last-child { margin-left: 12px; }
.abt { font: 12px "Open Sans", sans-serif; fill: #555; }
.abc { font: 12px "Open Sans", sans-serif; fill: #444; }
.num1 { grid-template-columns: 176px; padding-left: 10px; justify-content: start; }
.num2 { grid-template-columns: 20px 24px 32px 24px 14px 25px 32px; padding-left: 14px; justify-content: start; }
.pct { font-size: 18px; color: #555; }
.comma { font: bold 30px "Liberation Serif", serif; line-height: 10px; margin-top: -14px; color: #555; }
.dec { font: 9.5px "Open Sans", sans-serif; fill: #333; letter-spacing: -.4px; }
.num2 svg:nth-last-child(2) { margin-left: 4px; }
.cols-styles { display: grid; grid-template-columns: 92px 71px 57px; padding-left: 9px; }
.cols-styles .big > svg:first-child, .cols-cells .big > svg:first-child { margin-left: 2px; }
.cols-cells { display: grid; grid-template-columns: 50px 54px 50px; padding-left: 11px; }
.cells .cap { padding-right: 3px; } .styles .cap { padding-right: 2px; }
.edit .cap { padding-right: 2px; }
.cols-edit { display: grid; grid-template-columns: 126px 56px 54px; }
.cols-edit .lines { padding-left: 16px; }
.cols-edit .big > svg:first-child { margin-left: 2px; }
.az { font: 600 18px "Open Sans", sans-serif; }
.blue { fill: #4a80b8; } .purple { fill: #9a62b8; }
.collapse { margin: 97px 0 0 119px; }

/* formula bar */
.fbar { display: flex; align-items: flex-start; padding: 12px 0 0 6px; }
.name, .fx, .input { height: 30px; background: #fdfdfd; border: 1px solid #c3c3c3; display: flex; align-items: center; }
.name { width: 127px; justify-content: space-between; padding: 0 8px 0 6px; font-size: 15.6px; color: #444; }
.dots { margin: 8px 17px 0 17px; }
.fx { width: 137px; padding-left: 14px; }
.fx svg + svg { margin-left: 29px; }
.fx span { margin-left: 29px; font: italic 22px "Liberation Serif", serif; color: #555; line-height: 20px; }
.fx small { font-size: 18px; }
.input { margin-left: 3px; width: 1604px; justify-content: flex-end; padding-right: 5px; }

/* worksheet */
.work { display: grid; grid-template-columns: 1894px 1fr; }
.sheet { position: relative; background: #fff; border: 1px solid #999; border-bottom: 0; font-family: Lato, "Open Sans", sans-serif; font-variant-ligatures: none; color: #000; }
.cell-a1 { position: relative; width: 273px; height: 24px; border: 2px solid #217346; border-top-width: 1px; border-left-width: 1px; }
.cell-a1::after { content: ""; position: absolute; right: -4px; bottom: -3px; width: 6px; height: 6px; background: #217346; border: solid #fff; border-width: 1px 0 0 1px; }
.pivot { width: 419px; margin-top: 21px; border-collapse: separate; border-spacing: 0; table-layout: fixed; font-size: 16.6px; }
.pivot tr { height: 24px; }
.pivot td, .pivot th { padding: 1px 4px 0 2px; line-height: 22px; }
.pivot td:last-child { text-align: right; letter-spacing: -.35px; }
.pivot th { height: 26px; text-align: left; background: #4472c4; color: #fff; border-top: 2px solid #2f5496; font-weight: 700; position: relative; letter-spacing: .2px; }
.pivot th:first-child { width: 273px; }
.filter { position: absolute; right: 2px; top: 1px; width: 21px; height: 21px; background: #f7f8fa; border: 1px solid #b5b9c1; display: grid; place-items: center; }
.pivot tfoot td { font-weight: 700; border-top: 1px solid #2f5496; border-bottom: 2px solid #2f5496; line-height: 20px; letter-spacing: .15px; }
.pivot tbody tr:last-child { height: 23px; }
.pivot tbody tr:last-child td { line-height: 21px; }
.pivot tfoot tr { height: 25px; }
.chart { position: absolute; left: 495px; top: 46px; width: 588px; height: 457px; margin: 0; border: 1px solid #d9d9d9; padding-left: 222px; }
.chart figcaption { margin-left: -182px; width: 545px; text-align: center; padding-top: 11px; height: 86px; font: 23.2px/28px "Liberation Serif", serif; color: #595959; }
.plot { height: 330px; border-left: 1px solid #d9d9d9; display: grid; grid-template-rows: repeat(17, 1fr); }
.bar { display: flex; align-items: center; font-size: 13.8px; line-height: 18px; }
.bar span { width: 206px; margin-left: -221px; margin-right: 14px; text-align: right; }
.bar i { height: 7px; background: #70ad47; }
.axis { display: grid; grid-template-columns: repeat(6, 63.25px); margin-left: -32px; margin-top: 9px; text-align: center; font-size: 13.8px; line-height: 20px; letter-spacing: -.15px; }
.back { position: absolute; left: 37px; top: 559px; }
.next { position: absolute; left: 1500px; top: 562px; }
.dash { position: absolute; left: 665px; top: 555px; width: 260px; height: 33px; overflow: hidden; font-size: 40px; line-height: 42px; font-weight: 700; color: #c00000; }
.vscroll { display: grid; grid-template-rows: 19px 650px 1fr; padding: 2px 0 0 4px; }
.vscroll span, .vscroll i { width: 18px; border: 1px solid #999; background: #fff; display: grid; place-items: center; }
.vscroll i { border-top: 0; }
.vscroll span:last-child { height: 19px; align-self: end; margin-bottom: -1px; }

/* sheet tabs */
.sheets { display: flex; align-items: flex-start; border-top: 1px solid #999; border-bottom: 1px solid #c3c3c3; font-size: 16.4px; color: #444; }
.arr { margin: 9px 0 0 28px; }
.arr + .arr { margin-left: 24px; margin-right: 41px; }
.sheets > span { height: 21px; margin-top: 3px; line-height: 14px; text-align: center; border-left: 1px solid #999; }
.sheets > span:nth-of-type(1) { width: 111px; }
.sheets > span:nth-of-type(2) { width: 178px; }
.sheets > span:nth-of-type(3) { width: 142px; }
.sheets > span:nth-of-type(4) { width: 116px; }
.sheets > span:nth-of-type(5) { width: 138px; }
.sheets > span:nth-of-type(6) { width: 203px; }
.sheets > span:nth-of-type(7) { width: 121px; }
.sheets > .cur:nth-of-type(8) { width: 167px; height: 26px; margin-top: -1px; line-height: 22px; border: 1px solid #999; border-width: 0 1px 2px 1px; border-bottom-color: #217346; background: #fff; color: #217346; font-weight: 700; letter-spacing: -.15px; }
.sheets > span:nth-of-type(9) { width: 172px; border: 0; }
.sheets > span:nth-of-type(10) { width: 96px; padding-right: 4px; }
.sheets > .cut { width: 84px; padding-left: 14px; text-align: left; }
.more { color: #0f6b37; font-weight: 700; width: 32px; padding-left: 6px; line-height: 20px; }
.plus { margin-top: 4px; }
.grip { margin: 8px 14px 0 18px; }
.hscroll { display: grid; grid-template-columns: 19px 131px 7px 19px; height: 20px; margin-top: 4px; background: #f3f3f3; }
.hscroll em, .hscroll i { border: 1px solid #999; background: #fff; display: grid; place-items: center; }
.hscroll i { border-left: 0; }
.hscroll em:last-child { grid-column: 4; }

/* status bar */
.status { display: flex; align-items: center; background: #f3f3f3; font-size: 12.6px; letter-spacing: -.15px; padding: 1px 0 0 9px; color: #444; }
.status > span:first-child { width: 37px; }
.status > svg { margin-left: 24px; }
.acc { margin-left: 3px; width: 1456px; }
.view { width: 50px; height: 26px; display: grid; place-items: center; }
.view.on { background: #c6c6c6; }
.zm, .zp { width: 14px; font-size: 19px; line-height: 20px; text-align: center; }
.zm { margin-left: 6px; }
.zoom { width: 125px; height: 14px; margin: 0 4px 0 5px; background: linear-gradient(#444, #444) center / 100% 1px no-repeat; display: grid; place-items: center; }
.zoom i { width: 6px; height: 14px; background: #444; }
.pc { margin-left: 14px; }

/* taskbar */
.task { background: #161616; border-top: 1px solid #333; display: flex; align-items: center; padding-bottom: 2px; color: #d0d0d0; font-size: 14px; }
.weather { margin: -4px 0 0 25px; }
.wt { display: grid; line-height: 20px; margin-left: 9px; width: 383px; letter-spacing: -.4px; }
.wt span:last-child { color: #a8a8a8; }
.search { width: 275px; height: 40px; margin-left: 17px; border-radius: 20px; background: #2e2e2e; border: 1px solid #3f3f3f; display: flex; align-items: center; padding-left: 14px; color: #adadad; font-size: 15.800px; }
.search span { margin-left: 12px; width: 161px; }
.apps { display: flex; margin-left: 5px; }
.apps div { width: 50px; height: 50px; margin-right: 5px; display: grid; place-items: center; position: relative; border-radius: 5px; }
.apps svg { width: 30px; height: 30px; }
.apps .run::after { content: ""; position: absolute; bottom: 1px; left: 21px; width: 8px; height: 4px; border-radius: 2px; background: #888; }
.apps .xl { background: #202020; border: 1px solid #2b2b2b; }
.apps .xl::after { content: ""; position: absolute; bottom: 0; left: 14px; width: 20px; height: 4px; border-radius: 2px; background: #3d9bd2; }
.wa sup { position: absolute; left: 26px; top: 3px; width: 21px; height: 21px; border-radius: 50%; background: #3c96cc; color: #111; font-size: 12.500px; line-height: 20px; text-align: center; letter-spacing: -.5px; }
.zm-t { font: 600 8px "Open Sans", sans-serif; fill: #d8d8d8; }
.xl-t { font: bold 12px "Open Sans", sans-serif; fill: #ddd; }
.tray { display: grid; grid-template-columns: 40px 40px 56px 38px 20px 42px 87px 39px; margin-left: 55px; align-items: center; justify-items: center; }
.lang, .clock { display: grid; line-height: 20px; text-align: center; }
.clock { text-align: right; justify-self: end; font-size: 14.6px; letter-spacing: -.05px; }
```
